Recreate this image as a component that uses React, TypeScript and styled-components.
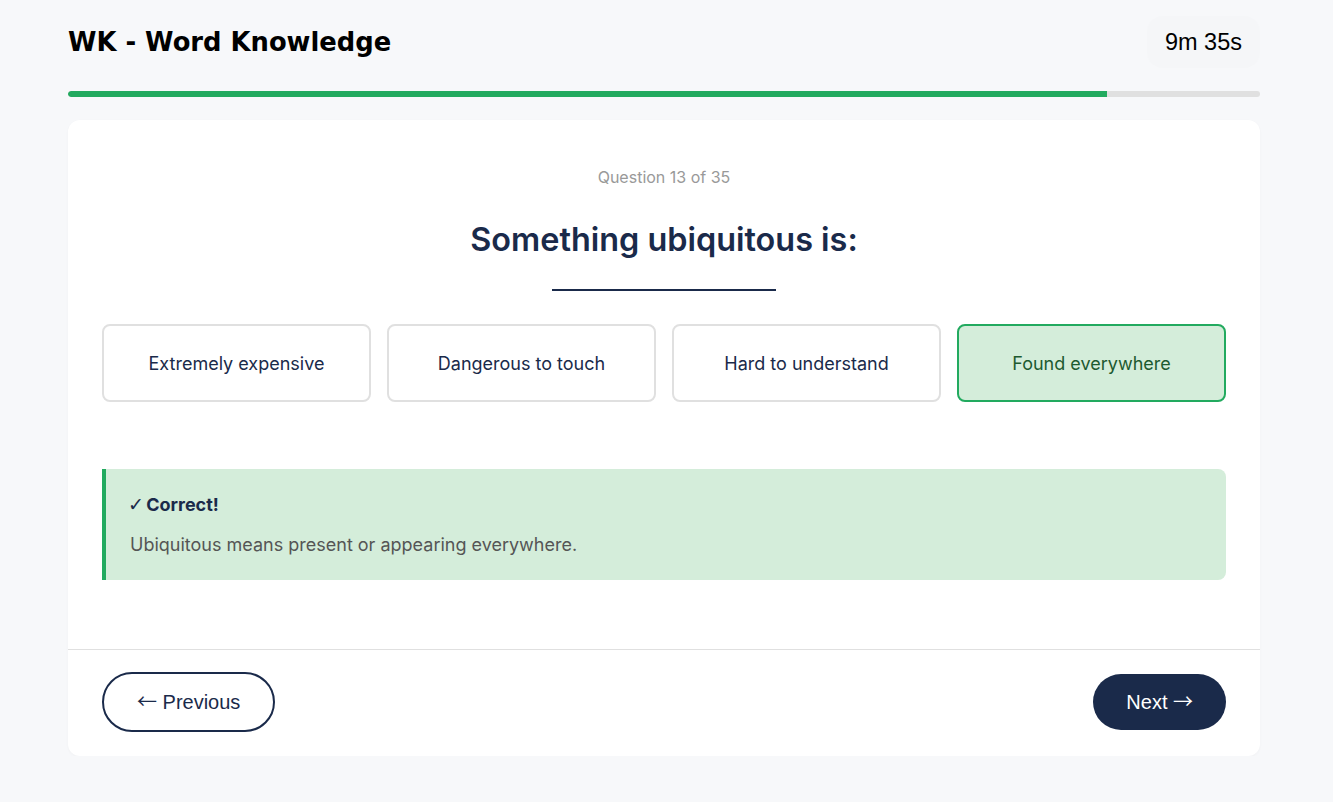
import styled, { createGlobalStyle } from "styled-components";

const GlobalStyle = createGlobalStyle`
  html, body {
    margin: 0;
    padding: 0;
    background: #f7f8fa;
  }
  * {
    box-sizing: border-box;
  }
`;

const Page = styled.div`
  width: 1192px;
  margin-left: 68px;
  padding-top: 16px;
  font-family: Inter, "Liberation Sans", sans-serif;
`;

const Header = styled.header`
  display: flex;
  align-items: center;
  justify-content: space-between;
  height: 52px;
`;

const Title = styled.h1`
  margin: 0;
  font-family: "DejaVu Sans", sans-serif;
  font-weight: 700;
  font-size: 25.8px;
  color: #000;
`;

const Timer = styled.div`
  display: flex;
  align-items: center;
  height: 52px;
  padding: 0 18px;
  border-radius: 16px;
  background: #f5f6f8;
  font-family: "Liberation Sans", Arial, sans-serif;
  font-size: 23.5px;
  color: #000;
`;

const Track = styled.div`
  margin-top: 23px;
  height: 6px;
  border-radius: 3px;
  background: #e0e0e0;
  overflow: hidden;
`;

const Fill = styled.div`
  height: 100%;
  background: #22aa5f;
  border-radius: 3px 0 0 3px;
`;

const Card = styled.main`
  margin-top: 23px;
  background: #fff;
  border-radius: 12px;
  box-shadow: 0 1px 3px rgba(0, 0, 0, 0.03);
`;

const Body = styled.section`
  padding: 48px 34px 69px;
  display: flex;
  flex-direction: column;
  align-items: center;
`;

const Counter = styled.div`
  font-size: 16px;
  color: #999;
  line-height: 18px;
`;

const Question = styled.h2`
  margin: 34px 0 0;
  font-size: 32.4px;
  font-weight: 600;
  line-height: 40px;
  color: #1a2a4a;
`;

const Blank = styled.div`
  width: 224px;
  height: 2px;
  margin-top: 29px;
  background: #1a2a4a;
`;

const Options = styled.div`
  width: 100%;
  margin-top: 33px;
  display: grid;
  grid-template-columns: repeat(4, 1fr);
  gap: 16px;
`;

const Option = styled.button<{ $selected?: boolean }>`
  height: 78px;
  border-radius: 8px;
  border: 2px solid ${(p) => (p.$selected ? "#22aa5f" : "#e0e0e0")};
  background: ${(p) => (p.$selected ? "#d4edda" : "#fff")};
  color: ${(p) => (p.$selected ? "#1d5a30" : "#1a2a4a")};
  font-family: Inter, "Liberation Sans", sans-serif;
  font-size: 18px;
  cursor: pointer;
`;

const Feedback = styled.div`
  width: 100%;
  margin-top: 67px;
  padding: 25px 24px 24px 22px;
  background: #d4edda;
  border-left: 4px solid #22aa5f;
  border-radius: 0 8px 8px 0;
`;

const FeedbackTitle = styled.div`
  height: 22px;
  font-size: 18px;
  font-weight: 700;
  color: #1a2a4a;
  line-height: 22px;
`;

const Check = styled.span`
  font-family: "DejaVu Sans", sans-serif;
  font-weight: 700;
  font-size: 19px;
  line-height: 0;
  margin-right: -2px;
`;

const FeedbackText = styled.p`
  margin: 18px 0 0 2px;
  font-size: 18px;
  color: #555;
  line-height: 22px;
`;

const Footer = styled.footer`
  border-top: 1px solid #e0e0e0;
  padding: 22px 34px 24px;
  display: flex;
  align-items: center;
  justify-content: space-between;
`;

const NavButton = styled.button<{ $primary?: boolean }>`
  height: ${(p) => (p.$primary ? "56px" : "60px")};
  padding: 0 33px;
  border-radius: 30px;
  border: ${(p) => (p.$primary ? "none" : "2px solid #1a2a4a")};
  background: ${(p) => (p.$primary ? "#1a2a4a" : "#fff")};
  color: ${(p) => (p.$primary ? "#fff" : "#1a2a4a")};
  font-family: "Liberation Sans", Arial, sans-serif;
  font-size: 20px;
  line-height: 24px;
  cursor: pointer;
`;

const Arrow = styled.span`
  font-family: "Noto Sans CJK SC", sans-serif;
  font-size: 20px;
  line-height: 0;
`;

const answers = [
  "Extremely expensive",
  "Dangerous to touch",
  "Hard to understand",
  "Found everywhere",
];

export default function App() {
  const current = 13;
  const total = 35;
  const selected = 3;
  const progress = 87.2;
  return (
    <>
      <GlobalStyle />
      <Page>
        <Header>
          <Title>WK - Word Knowledge</Title>
          <Timer>9m 35s</Timer>
        </Header>
        <Track>
          <Fill style={{ width: `${progress}%` }} />
        </Track>
        <Card>
          <Body>
            <Counter>
              Question {current} of {total}
            </Counter>
            <Question>Something ubiquitous is:</Question>
            <Blank />
            <Options>
              {answers.map((a, i) => (
                <Option key={a} $selected={i === selected}>
                  {a}
                </Option>
              ))}
            </Options>
            <Feedback>
              <FeedbackTitle>
                <Check>✓</Check> Correct!
              </FeedbackTitle>
              <FeedbackText>
                Ubiquitous means present or appearing everywhere.
              </FeedbackText>
            </Feedback>
          </Body>
          <Footer>
            <NavButton>
              <Arrow>←</Arrow> Previous
            </NavButton>
            <NavButton $primary>
              Next <Arrow>→</Arrow>
            </NavButton>
          </Footer>
        </Card>
      </Page>
    </>
  );
}
